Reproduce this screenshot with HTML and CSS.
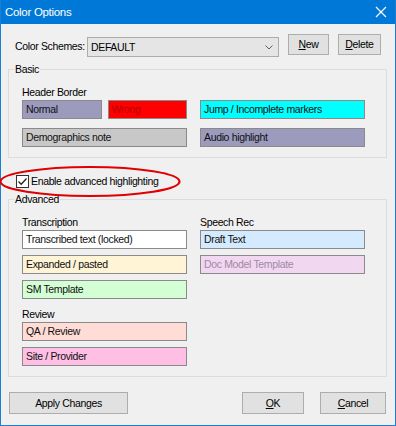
FILE: index.html
```html
<!DOCTYPE html>
<html>
<head>
<meta charset="utf-8">
<title>Color Options</title>
<link rel="stylesheet" href="styles.css">
</head>
<body>
<div class="window">
  <div class="titlebar">
    <span class="title">Color Options</span>
    <svg class="close" width="12" height="12" viewBox="0 0 12 12"><path d="M1 1L11 11M11 1L1 11" stroke="#fff" stroke-width="1.2" fill="none"/></svg>
  </div>
  <div class="content">
    <div class="scheme-row">
      <span class="scheme-label">Color Schemes:</span>
      <div class="combo"><span>DEFAULT</span><svg width="8" height="5" viewBox="0 0 8 5"><path d="M0.5 0.5L4 4L7.5 0.5" stroke="#606060" stroke-width="1" fill="none"/></svg></div>
      <button class="btn btn-new"><u>N</u>ew</button>
      <button class="btn btn-delete"><u>D</u>elete</button>
    </div>

    <fieldset class="group group-basic">
      <legend>Basic</legend>
      <div class="sub-label first">Header Border</div>
      <div class="basic-grid">
        <div class="pair">
          <div class="swatch normal">Normal</div>
          <div class="swatch wrong">Wrong</div>
        </div>
        <div class="swatch jump">Jump / Incomplete markers</div>
        <div class="swatch demo">Demographics note</div>
        <div class="swatch audio">Audio highlight</div>
      </div>
    </fieldset>

    <div class="check-row">
      <span class="checkbox"><svg width="11" height="11" viewBox="0 0 11 11"><path d="M1.5 5.5L4.2 8.2L9.5 2.5" stroke="#222" stroke-width="1.3" fill="none"/></svg></span>
      <span class="check-text">Enable advanced highlighting</span>
      <svg class="ellipse" width="184" height="34" viewBox="0 0 184 34"><ellipse cx="91" cy="16.5" rx="89.5" ry="14.5" stroke="#e00000" stroke-width="2.2" fill="none"/></svg>
    </div>

    <fieldset class="group group-advanced">
      <legend>Advanced</legend>
      <div class="adv-cols">
        <div class="col">
          <div class="sub-label first">Transcription</div>
          <div class="stack">
            <div class="swatch transcribed">Transcribed text (locked)</div>
            <div class="swatch expanded">Expanded / pasted</div>
            <div class="swatch sm">SM Template</div>
          </div>
          <div class="sub-label review">Review</div>
          <div class="stack">
            <div class="swatch qa">QA / Review</div>
            <div class="swatch site">Site / Provider</div>
          </div>
        </div>
        <div class="col">
          <div class="sub-label first">Speech Rec</div>
          <div class="stack">
            <div class="swatch draft">Draft Text</div>
            <div class="swatch docmodel">Doc Model Template</div>
          </div>
        </div>
      </div>
    </fieldset>

    <div class="footer">
      <button class="btn btn-apply">Apply Changes</button>
      <div class="spacer"></div>
      <button class="btn btn-ok"><u>O</u>K</button>
      <button class="btn btn-cancel"><u>C</u>ancel</button>
    </div>
  </div>
</div>
</body>
</html>
```
FILE: styles.css
```css
html, body {
  margin: 0;
  padding: 0;
}
body {
  font-family: "Liberation Sans", Arial, sans-serif;
  font-size: 10.5px;
  letter-spacing: -0.35px;
  line-height: 13px;
  color: #000;
  background: #f0f0f0;
  white-space: nowrap;
}
.window {
  width: 396px;
  height: 426px;
  box-sizing: border-box;
  border: 1px solid #1a7fd4;
  border-top: none;
  background: #f0f0f0;
  display: flex;
  flex-direction: column;
}
.titlebar {
  height: 24px;
  flex: none;
  background: #0078d7;
  color: #fff;
  display: flex;
  align-items: center;
  justify-content: space-between;
  padding: 0 8px 0 4px;
}
.title {
  font-size: 11.5px;
  letter-spacing: -0.3px;
}
.close {
  display: block;
}
.content {
  flex: 1;
  display: flex;
  flex-direction: column;
  padding: 0 8px 0 7px;
}
.scheme-row {
  display: flex;
  align-items: flex-start;
  margin-top: 10px;
  height: 22px;
}
.scheme-label {
  width: 72px;
  margin-left: 7px;
  margin-top: 6px;
}
.combo {
  width: 192px;
  height: 20px;
  box-sizing: border-box;
  margin-top: 3px;
  border: 1px solid #acacac;
  background: #e5e5e5;
  display: flex;
  align-items: center;
  justify-content: space-between;
  padding: 0 5px 0 3px;
}
.combo svg {
  display: block;
}
.btn {
  font: inherit;
  letter-spacing: inherit;
  color: #000;
  background: #e1e1e1;
  border: 1px solid #adadad;
  padding: 0;
  box-sizing: border-box;
  height: 21px;
}
.btn u {
  text-decoration: underline;
}
.btn-new {
  margin-left: 9px;
  width: 41px;
}
.btn-delete {
  margin-left: 9px;
  width: 43px;
}
.group {
  margin: 0;
  border: 1px solid #dcdcdc;
  padding: 0 0 10px 13px;
  min-width: 0;
}
.group legend {
  padding: 0 1px;
  margin-left: -8px;
}
.group-basic {
  margin-top: 7px;
}
.sub-label.first {
  margin-top: 10px;
}
.basic-grid {
  margin-top: 1px;
  display: grid;
  grid-template-columns: 165px 165px;
  column-gap: 13px;
  row-gap: 9px;
}
.pair {
  display: flex;
  gap: 6px;
}
.pair .swatch {
  flex: 1;
}
.swatch {
  height: 19px;
  box-sizing: border-box;
  border: 1px solid #8a8a8a;
  padding: 0 3px;
  display: flex;
  align-items: center;
  overflow: hidden;
  color: #111;
}
.normal, .audio { background: #9c9bbe; }
.wrong { background: #ff0000; color: #b40000; }
.jump { background: #00ffff; }
.demo { background: #c8c8c8; }
.transcribed { background: #ffffff; }
.expanded { background: #fff4d6; }
.sm { background: #d4ffd4; }
.qa { background: #ffdcd6; }
.site { background: #ffbfe4; }
.draft { background: #d4ebff; }
.docmodel { background: #f1d8f0; color: #a08aa6; }

.check-row {
  position: relative;
  display: flex;
  align-items: center;
  gap: 2px;
  margin-top: 17px;
  margin-left: 8px;
  height: 13px;
}
.checkbox {
  width: 13px;
  height: 13px;
  box-sizing: border-box;
  border: 1px solid #333;
  background: #fff;
  display: flex;
  align-items: center;
  justify-content: center;
}
.checkbox svg {
  display: block;
}
.ellipse {
  position: absolute;
  left: -17px;
  top: -10px;
  pointer-events: none;
}
.group-advanced {
  margin-top: 5px;
}
.adv-cols {
  display: grid;
  grid-template-columns: 165px 165px;
  column-gap: 13px;
}
.stack {
  display: flex;
  flex-direction: column;
  gap: 6px;
  margin-top: 1px;
}
.sub-label.review {
  margin-top: 9px;
}
.footer {
  display: flex;
  margin-top: 15px;
  padding: 0 1px;
}
.btn-apply {
  width: 119px;
  height: 22px;
}
.spacer {
  flex: 1;
}
.btn-ok {
  width: 62px;
  height: 22px;
  margin-right: 16px;
}
.btn-cancel {
  width: 66px;
  height: 22px;
}
```
